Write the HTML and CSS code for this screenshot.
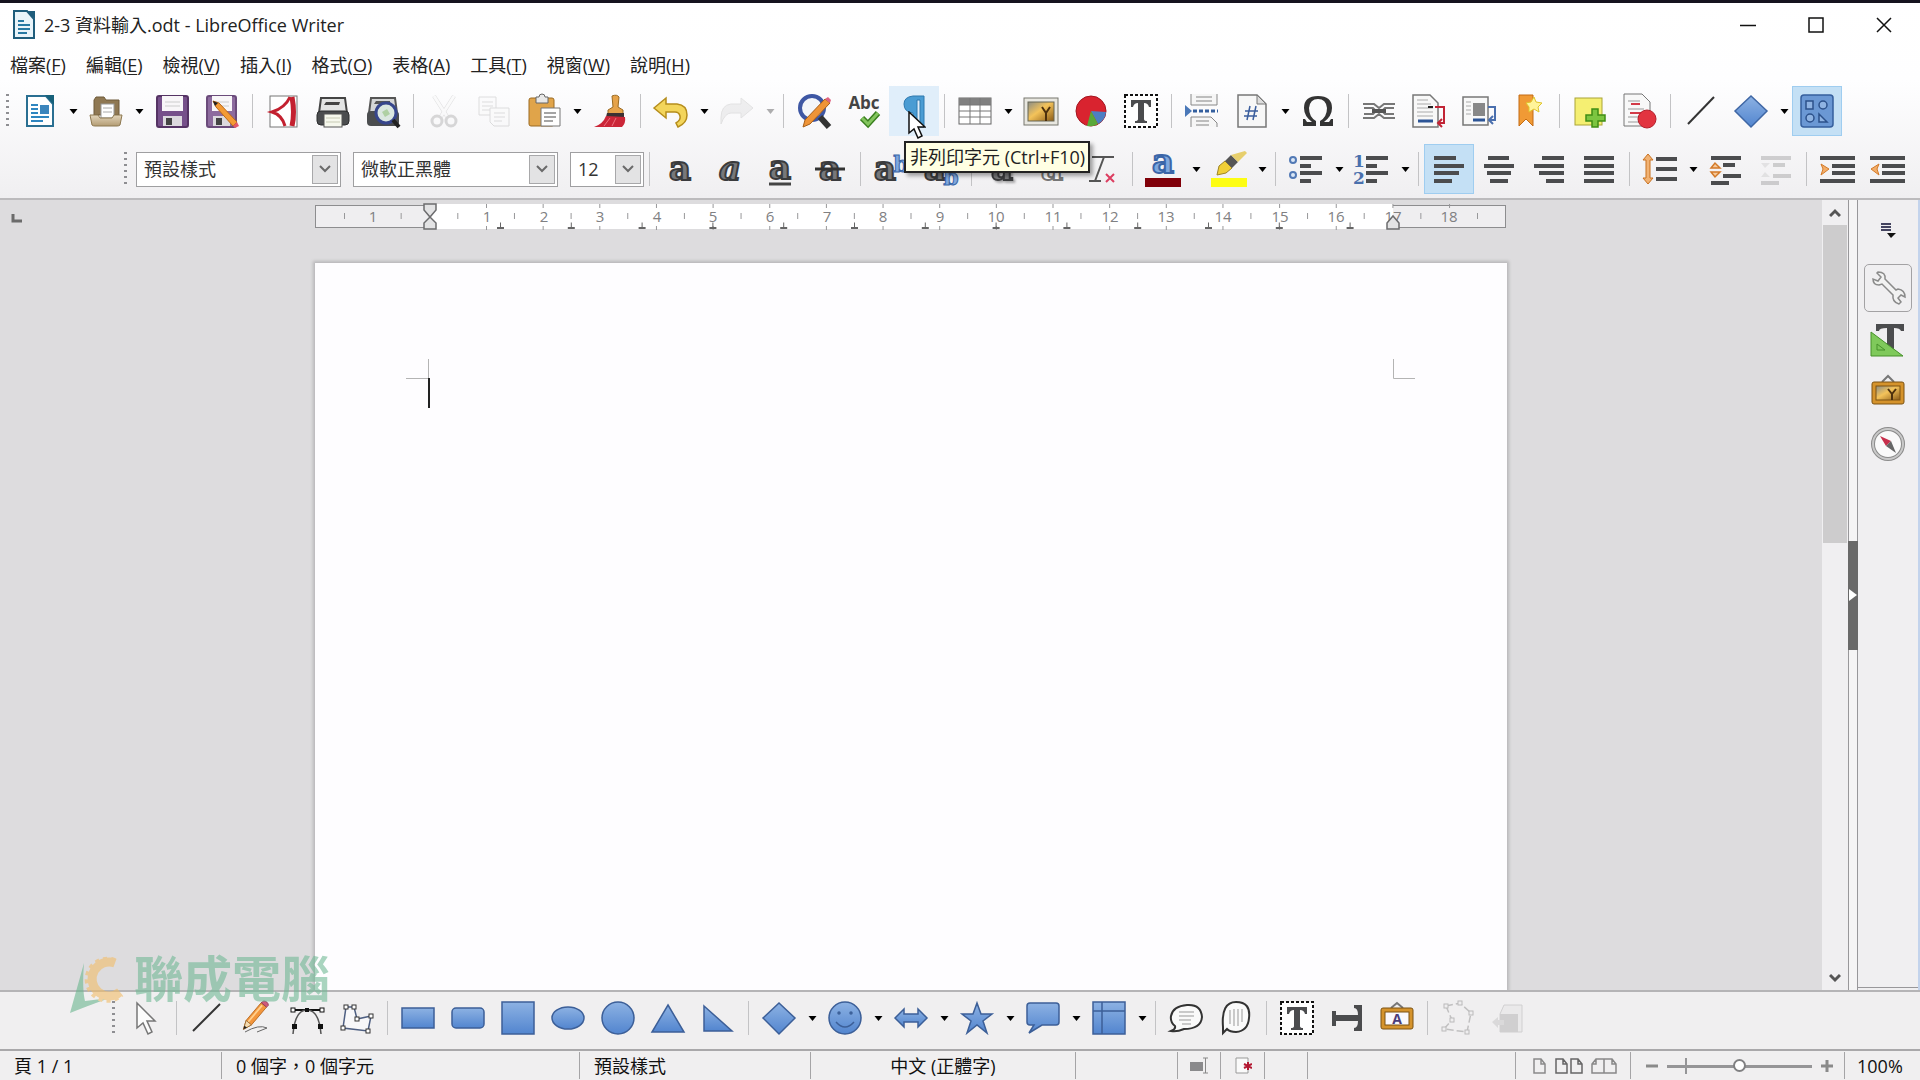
FILE: index.html
```html
<!DOCTYPE html>
<html lang="zh-Hant">
<head>
<meta charset="utf-8">
<title>2-3 資料輸入.odt - LibreOffice Writer</title>
<link rel="stylesheet" href="styles.css">
</head>
<body>
<svg class="defs" width="0" height="0" aria-hidden="true">
  <defs>
    <linearGradient id="blue" x1="0" y1="0" x2="0" y2="1"><stop offset="0" stop-color="#8db2e3"/><stop offset="1" stop-color="#5285cf"/></linearGradient>
    <linearGradient id="sunset" x1="0" y1="0" x2="1" y2="1"><stop offset="0" stop-color="#8b8d86"/><stop offset=".45" stop-color="#f4c35a"/><stop offset="1" stop-color="#8a5a16"/></linearGradient>
    <linearGradient id="folder" x1="0" y1="0" x2="0" y2="1"><stop offset="0" stop-color="#e3d5bb"/><stop offset="1" stop-color="#b39c74"/></linearGradient>
    <symbol id="drop" viewBox="0 0 8 5"><path d="M0 0H8L4 5Z"/></symbol>
    <symbol id="chev" viewBox="0 0 12 8"><path d="M1 1L6 6L11 1" fill="none" stroke="#6a6a6a" stroke-width="2"/></symbol>
    <symbol id="textbox" viewBox="0 0 36 36"><rect x="2" y="2" width="32" height="32" fill="#fff" stroke="#111" stroke-width="2" stroke-dasharray="3 2"/><path d="M8 7H28V14H26Q25 10 21 10V26Q21 28 24 28V30H12V28Q15 28 15 26V10Q11 10 10 14H8Z" fill="#4b4c4e"/></symbol>
    <symbol id="pencil" viewBox="0 0 36 36"><path d="M5 33L8 23L25 3L31 8L14 28Z" fill="#f3963c" stroke="#b5651b"/><path d="M10 25L26 6" stroke="#ffd08e" stroke-width="2"/><path d="M25 3L28 1Q33 2 33 6L31 8Z" fill="#d0587a" stroke="#8d3a55"/><path d="M5 33L8 23L14 28Z" fill="#f5dbb0" stroke="#9a6a30"/><path d="M5 33L6 29L9 31Z" fill="#222"/></symbol>
  </defs>
</svg>

<header class="titlebar">
  <svg width="24" height="30" viewBox="0 0 24 30"><path d="M2 1H15L22 9V28H2Z" fill="#e9f4fa" stroke="#1f5d7c" stroke-width="2"/><path d="M15 1H23V9Z" fill="#1f5d7c"/><path d="M6 11H12M6 15H18M6 19H18M6 23H15" stroke="#2779a3" stroke-width="2"/></svg>
  <h1>2-3 資料輸入.odt - LibreOffice Writer</h1>
  <div class="window-buttons">
    <button aria-label="最小化"><svg width="16" height="16" viewBox="0 0 16 16"><path d="M0 8.500H16" stroke="#111" stroke-width="1.500"/></svg></button>
    <button aria-label="最大化"><svg width="16" height="16" viewBox="0 0 16 16"><rect x="1" y="1" width="14" height="14" fill="none" stroke="#111" stroke-width="1.500"/></svg></button>
    <button aria-label="關閉"><svg width="16" height="16" viewBox="0 0 16 16"><path d="M1 1L15 15M15 1L1 15" stroke="#111" stroke-width="1.500"/></svg></button>
  </div>
</header>

<nav class="menubar">
  <a href="#">檔案(<u>F</u>)</a><a href="#">編輯(<u>E</u>)</a><a href="#">檢視(<u>V</u>)</a><a href="#">插入(<u>I</u>)</a><a href="#">格式(<u>O</u>)</a><a href="#">表格(<u>A</u>)</a><a href="#">工具(<u>T</u>)</a><a href="#">視窗(<u>W</u>)</a><a href="#">說明(<u>H</u>)</a>
</nav>

<div class="toolbar standard">
  <i class="grip"></i>
  <button aria-label="新增"><svg viewBox="0 0 36 36"><path d="M5 3H24L31 11V33H5Z" fill="#fff" stroke="#2a6f92" stroke-width="2"/><path d="M23 2H32V12Z" fill="#17617a"/><path d="M9 12H16M9 16H16M9 20H16M9 24H27M9 28H21" stroke="#2f86c0" stroke-width="2"/><rect x="18" y="12" width="9" height="9" fill="#3c86bd"/></svg></button>
  <button class="arrow" aria-label="新增選項"><svg><use href="#drop"/></svg></button>
  <button aria-label="開啟"><svg viewBox="0 0 36 36"><path d="M6 20V7L8 4H16L18 7H31V22H6Z" fill="#8f7853" stroke="#6e5a3a"/><rect x="13" y="11" width="13" height="14" fill="#fff" stroke="#999"/><path d="M15 15H24M15 19H24" stroke="#aaa"/><path d="M2 22H10L12 25H24L26 22H34L32 32Q31 33 29 33H7Q5 33 4 32Z" fill="url(#folder)" stroke="#8d7850"/></svg></button>
  <button class="arrow" aria-label="開啟選項"><svg><use href="#drop"/></svg></button>
  <button aria-label="儲存"><svg viewBox="0 0 36 36"><rect x="3" y="3" width="31" height="31" rx="2" fill="#76508a" stroke="#553364" stroke-width="2"/><rect x="8" y="3" width="21" height="15" fill="#f8f6f8"/><path d="M11 9H26M11 13H26" stroke="#ccc"/><rect x="9" y="23" width="19" height="10" fill="#dcd9de"/><rect x="12" y="25" width="6" height="7" fill="#444"/></svg></button>
  <button aria-label="另存新檔"><svg viewBox="0 0 36 36"><rect x="3" y="3" width="29" height="31" rx="2" fill="#8d6b9e" stroke="#6b4b7b" stroke-width="2"/><rect x="8" y="3" width="20" height="15" fill="#f8f6f8"/><path d="M11 9H25M11 13H25" stroke="#ccc"/><rect x="9" y="23" width="17" height="10" fill="#dcd9de"/><rect x="12" y="25" width="6" height="7" fill="#444"/><path d="M9 8L15 10L33 29L29 33L12 14Z" fill="#f49a35" stroke="#bb6918"/><path d="M9 8L14 10L11 13Z" fill="#222"/><path d="M33 29L35 33L31 35L29 33Z" fill="#e5586a"/></svg></button>
  <i class="sep"></i>
  <button aria-label="匯出為 PDF"><svg viewBox="0 0 36 36"><rect x="5" y="3" width="27" height="31" fill="#fff" stroke="#777"/><path d="M25 4Q20 15 7 19Q17 22 20 33" fill="none" stroke="#c3202f" stroke-width="3"/><path d="M27 4Q30 20 27 33" fill="none" stroke="#c3202f" stroke-width="5"/></svg></button>
  <button aria-label="列印"><svg viewBox="0 0 36 36"><path d="M4 20L6 5H30L32 20Z" fill="#e3e4e4" stroke="#444" stroke-width="2"/><path d="M11 9H25L24 12H9Z" fill="#444"/><rect x="2" y="18" width="32" height="14" rx="4" fill="#4b4d4f" stroke="#2d2e2f"/><rect x="9" y="21" width="18" height="13" fill="#f6f8ed" stroke="#555"/><path d="M11 25H25M11 29H25" stroke="#c8cbb5"/></svg></button>
  <button aria-label="預覽列印"><svg viewBox="0 0 36 36"><path d="M4 20L6 5H30L32 20Z" fill="#d5d6d7" stroke="#555" stroke-width="2"/><path d="M11 8H25V11H9Z" fill="#555"/><rect x="2" y="18" width="32" height="15" rx="4" fill="#4b4d4f"/><circle cx="21" cy="20" r="10" fill="#dbe7e0" stroke="#37468c" stroke-width="3"/><path d="M28 27L34 34" stroke="#222" stroke-width="4"/><path d="M17 19L22 16L25 21L20 24Z" fill="#afd0a3"/></svg></button>
  <i class="sep"></i>
  <button class="off" aria-label="剪下" disabled><svg viewBox="0 0 36 36"><path d="M8 3L22 25M28 3L14 25" stroke="#999" stroke-width="4"/><path d="M8 3L22 25M28 3L14 25" stroke="#f8f8f8" stroke-width="3"/><circle cx="11" cy="28" r="5" fill="none" stroke="#888" stroke-width="3"/><circle cx="25" cy="28" r="5" fill="none" stroke="#888" stroke-width="3"/></svg></button>
  <button class="off" aria-label="複製" disabled><svg viewBox="0 0 36 36"><path d="M3 4H20V22H3Z" fill="#fafafa" stroke="#999"/><path d="M6 9H17M6 13H17M6 17H14" stroke="#999"/><path d="M14 15H33V33H18L14 29Z" fill="#fafafa" stroke="#999"/><path d="M18 20H29M18 24H29M18 28H26" stroke="#999"/></svg></button>
  <button aria-label="貼上"><svg viewBox="0 0 36 36"><rect x="3" y="5" width="25" height="28" rx="2" fill="#e0a44a" stroke="#9b6b22"/><path d="M10 4H13Q13 1 16 1T19 4H22V10H10Z" fill="#e8e8e8" stroke="#666"/><path d="M15 15H34V33H15Z" fill="#fff" stroke="#777"/><path d="M18 20H30M18 24H30M18 28H27" stroke="#888" stroke-width="1.500"/></svg></button>
  <button class="arrow" aria-label="貼上選項"><svg><use href="#drop"/></svg></button>
  <button aria-label="仿製格式"><svg viewBox="0 0 36 36"><path d="M20 3Q25 1 27 4L26 14L31 17V22H16V17L21 14Z" fill="#e6a34a" stroke="#9b6b22"/><path d="M15 20H32V25L14 24Z" fill="#3b3133"/><path d="M14 23L33 24Q34 30 30 34H2Q11 31 14 23Z" fill="#cb2638"/><path d="M18 25L12 33M24 25L20 33" stroke="#ee7280"/></svg></button>
  <i class="sep"></i>
  <button aria-label="復原"><svg viewBox="0 0 36 36"><path d="M1 15L13 5V11H24Q34 12 34 22Q34 30 25 34L23 30Q28 27 27 23Q26 19 22 19H13V25Z" fill="#f3d55b" stroke="#b58d1c" stroke-width="1.500"/></svg></button>
  <button class="arrow" aria-label="復原選項"><svg><use href="#drop"/></svg></button>
  <button class="off" aria-label="取消復原" disabled><svg viewBox="0 0 36 36"><path d="M34 15L22 5V11H12Q2 12 2 25V31Q6 20 12 20H22V25Z" fill="#d2d2d2" stroke="#aaa"/></svg></button>
  <button class="arrow off" aria-label="取消復原選項"><svg><use href="#drop"/></svg></button>
  <i class="sep"></i>
  <button aria-label="尋找與取代"><svg viewBox="0 0 36 36"><circle cx="16" cy="15" r="12" fill="#f3f5fa" stroke="#3e57a4" stroke-width="4"/><path d="M24 24L33 34" stroke="#333" stroke-width="6"/><path d="M7 34L9 27L29 6L34 10L14 31Z" fill="#ef9437" stroke="#a65e1a"/><path d="M29 6L34 10L35 7L32 4Z" fill="#df6380"/></svg></button>
  <button aria-label="拼字檢查"><svg viewBox="0 0 36 36"><text x="18" y="16" text-anchor="middle" class="abc">Abc</text><path d="M16 25L22 31L32 20" fill="none" stroke="#397f1e" stroke-width="6"/><path d="M16 25L22 31L32 20" fill="none" stroke="#83c55e" stroke-width="3"/></svg></button>
  <div class="hovered">
    <button class="hover" aria-label="非列印字元" aria-describedby="tip"><svg viewBox="0 0 36 36"><path d="M17 3H28V34H24V7H21V34H17V20Q8 19 8 11Q8 4 17 3Z" fill="#4a9cd3" stroke="#2d78ae"/></svg></button>
    <svg class="pointer" width="18" height="28" viewBox="0 0 18 28"><path d="M1 1V22L6 18L10 27L14 25L10 16H17Z" fill="#fff" stroke="#111" stroke-width="1.500"/></svg>
    <div class="tooltip" id="tip" role="tooltip">非列印字元 (Ctrl+F10)</div>
  </div>
  <i class="sep"></i>
  <button aria-label="插入表格"><svg viewBox="0 0 36 36"><rect x="2" y="5" width="32" height="26" fill="#fff" stroke="#666"/><path d="M2 5H34V12H2Z" fill="#808080"/><path d="M2 12H34M2 18H34M2 24H34M13 5V31M23 5V31" stroke="#777"/></svg></button>
  <button class="arrow" aria-label="表格選項"><svg><use href="#drop"/></svg></button>
  <button aria-label="影像"><svg viewBox="0 0 36 36"><rect x="1" y="5" width="34" height="27" fill="#e8e7e0" stroke="#77776f"/><rect x="5" y="9" width="26" height="19" fill="url(#sunset)" stroke="#665"/><path d="M23 28V20L19 14M23 20L27 14" fill="none" stroke="#4d300d" stroke-width="2"/></svg></button>
  <button aria-label="圖表"><svg viewBox="0 0 36 36"><circle cx="18" cy="18" r="15" fill="#d9232f" stroke="#a3151f"/><path d="M18 18L33 19A15 15 0 0 1 25 31Z" fill="#4d7fc4"/><path d="M18 18L25 31A15 15 0 0 1 14 33Z" fill="#5aa839"/></svg></button>
  <button aria-label="文字方塊"><svg><use href="#textbox"/></svg></button>
  <i class="sep"></i>
  <button aria-label="插入分頁符"><svg viewBox="0 0 36 36"><path d="M7 1V12H33V1M7 34V24H27L33 30V34" fill="#f6f6f6" stroke="#888"/><path d="M12 4H28M12 8H28M12 28H25M12 32H25" stroke="#aaa" stroke-width="1.500"/><path d="M1 12L8 18L1 24Z" fill="#4a78b8"/><path d="M9 18H34" stroke="#345f9e" stroke-width="3" stroke-dasharray="4 2"/></svg></button>
  <button aria-label="插入欄位"><svg viewBox="0 0 36 36"><path d="M4 2H23L32 11V34H4Z" fill="#f7f7f7" stroke="#777" stroke-width="1.500"/><path d="M23 2V11H32Z" fill="#ddd" stroke="#777"/><path d="M16 13L13 27M22 13L19 27M11 18H24M10 23H23" stroke="#3b5e9e" stroke-width="1.500"/></svg></button>
  <button class="arrow" aria-label="欄位選項"><svg><use href="#drop"/></svg></button>
  <button aria-label="特殊字元"><svg viewBox="0 0 36 36"><path d="M3 33V26H5L7 29H12Q4 23 4 15Q4 3 18 3T32 15Q32 23 24 29H29L31 26H33V33H20V28Q27 24 27 15Q26 6 18 6T9 15Q9 24 16 28V33Z" fill="#333"/></svg></button>
  <i class="sep"></i>
  <button aria-label="超連結"><svg viewBox="0 0 36 36"><path d="M2 11H13L18 15L23 11H34M2 25H13L18 21L23 25H34M3 15H12L15 18L12 21H3M33 15H24L21 18L24 21H33" fill="none" stroke="#777" stroke-width="2"/><path d="M11 18H25" stroke="#555" stroke-width="4"/></svg></button>
  <button aria-label="註腳"><svg viewBox="0 0 36 36"><path d="M2 2H19L27 10V34H2Z" fill="#f8f8f8" stroke="#777" stroke-width="1.500"/><path d="M6 7H17M6 11H20M6 15H22M6 19H22M6 23H22" stroke="#aaa"/><path d="M17 14H22" stroke="#222" stroke-width="2"/><path d="M7 28H22" stroke="#2d5596" stroke-width="3"/><path d="M24 14H33V30H28M31 26L27 30L31 34" fill="none" stroke="#c22435" stroke-width="2"/></svg></button>
  <button aria-label="交互參照"><svg viewBox="0 0 36 36"><rect x="2" y="4" width="25" height="28" fill="#f8f8f8" stroke="#777" stroke-width="1.500"/><path d="M5 9H10M5 13H10M5 17H10M5 21H10" stroke="#aaa"/><rect x="12" y="10" width="12" height="13" fill="#888"/><path d="M12 27H24" stroke="#2d5596" stroke-width="3"/><path d="M27 14H34V27H29M32 23L28 27L32 31" fill="none" stroke="#4a6fae" stroke-width="2"/></svg></button>
  <button aria-label="書籤"><svg viewBox="0 0 36 36"><path d="M8 2H22V33L15 26L8 33Z" fill="#f09a35" stroke="#c36b14"/><path d="M23 4L25 9L31 10L27 14L28 19L23 16L18 19L18 14L15 10L20 9Z" fill="#fff49a" stroke="#e0c52c"/></svg></button>
  <i class="sep"></i>
  <button aria-label="註解"><svg viewBox="0 0 36 36"><rect x="3" y="5" width="27" height="27" fill="#f5ef72" stroke="#aaa437"/><path d="M20 16H26V22H33V28H26V34H20V28H14V22H20Z" fill="#7cc540" stroke="#3f8d14" stroke-width="1.500"/></svg></button>
  <button aria-label="追蹤修訂"><svg viewBox="0 0 36 36"><path d="M2 1H20L28 9V33H2Z" fill="#f8f8f8" stroke="#777"/><path d="M6 8H18M6 16H22M6 24H16M6 29H18" stroke="#999"/><path d="M9 11H18M8 20H20" stroke="#d33b48" stroke-width="2"/><circle cx="25" cy="26" r="9" fill="#e23440" stroke="#b31e2a"/></svg></button>
  <i class="sep"></i>
  <button aria-label="線條"><svg viewBox="0 0 36 36"><path d="M5 31L31 4" stroke="#333" stroke-width="2"/></svg></button>
  <button aria-label="基本形狀"><svg viewBox="0 0 36 36"><path d="M18 3L34 18L18 34L2 18Z" fill="url(#blue)" stroke="#3f67a5" stroke-width="1.500"/></svg></button>
  <button class="arrow" aria-label="基本形狀選項"><svg><use href="#drop"/></svg></button>
  <button class="on" aria-label="顯示繪圖功能"><svg viewBox="0 0 36 36"><rect x="2" y="2" width="32" height="32" rx="3" fill="#6b98d4" stroke="#365f9d" stroke-width="1.500"/><g fill="#8fb3e2" stroke="#2c518b" stroke-width="1.500"><rect x="7" y="8" width="7" height="8"/><circle cx="24" cy="12" r="4"/><circle cx="11" cy="25" r="4"/><path d="M20 21V29H28Z"/></g></svg></button>
</div>

<div class="toolbar formatting">
  <i class="grip"></i>
  <div class="combo wide"><select aria-label="段落樣式"><option>預設樣式</option></select><span><svg width="12" height="8"><use href="#chev"/></svg></span></div>
  <div class="combo wide"><select aria-label="字型名稱"><option>微軟正黑體</option></select><span><svg width="12" height="8"><use href="#chev"/></svg></span></div>
  <div class="combo narrow"><select aria-label="字型大小"><option>12</option></select><span><svg width="12" height="8"><use href="#chev"/></svg></span></div>
  <i class="sep"></i>
  <button aria-label="粗體"><svg viewBox="0 0 36 36"><text class="ch" x="18" y="29" text-anchor="middle">a</text></svg></button>
  <button aria-label="斜體"><svg viewBox="0 0 36 36"><text class="ch it" x="18" y="29" text-anchor="middle">a</text></svg></button>
  <button aria-label="底線"><svg viewBox="0 0 36 36"><text class="ch" x="18" y="28" text-anchor="middle">a</text><path d="M7 33H29" stroke="#444" stroke-width="3"/></svg></button>
  <button aria-label="刪除線"><svg viewBox="0 0 36 36"><text class="ch" x="18" y="29" text-anchor="middle">a</text><path d="M3 18H33" stroke="#333" stroke-width="3"/></svg></button>
  <i class="sep"></i>
  <button aria-label="上標"><svg viewBox="0 0 36 36"><text class="ch" x="12" y="29" text-anchor="middle">a</text><text class="mini" x="28" y="21" text-anchor="middle">b</text></svg></button>
  <button aria-label="下標"><svg viewBox="0 0 36 36"><text class="ch" x="12" y="29" text-anchor="middle">a</text><text class="mini" x="28" y="34" text-anchor="middle">b</text></svg></button>
  <i class="sep"></i>
  <button aria-label="陰影"><svg viewBox="0 0 36 36"><text class="ch shade" x="18" y="29" text-anchor="middle">a</text></svg></button>
  <button aria-label="外框"><svg viewBox="0 0 36 36"><text class="ch outline" x="18" y="29" text-anchor="middle">a</text></svg></button>
  <button aria-label="清除格式"><svg viewBox="0 0 36 36"><path d="M8 6H30M20 6L11 30M5 30H17" stroke="#555" stroke-width="2"/><path d="M22 23L30 31M30 23L22 31" stroke="#dc3d60" stroke-width="2"/></svg></button>
  <i class="sep"></i>
  <button aria-label="字型色彩"><svg viewBox="0 0 36 36"><text class="ch blue" x="18" y="22" text-anchor="middle">a</text><rect x="0" y="27" width="36" height="9" fill="#800009"/></svg></button>
  <button class="arrow" aria-label="字型色彩選項"><svg><use href="#drop"/></svg></button>
  <button aria-label="醒目提示"><svg viewBox="0 0 36 36"><path d="M6 24L8 15L14 10L21 17L15 22Z" fill="#f0cf37" stroke="#9f8526"/><path d="M14 10L20 4L27 11L21 17Z" fill="#555"/><path d="M20 4L34 0L36 2L27 11Z" fill="#e7cf6d"/><rect x="0" y="27" width="36" height="9" fill="#fdfd13"/></svg></button>
  <button class="arrow" aria-label="醒目提示選項"><svg><use href="#drop"/></svg></button>
  <i class="sep"></i>
  <button aria-label="項目符號"><svg viewBox="0 0 36 36"><circle cx="5" cy="9" r="3" fill="#dbe7f6" stroke="#5279b5" stroke-width="2"/><circle cx="5" cy="24" r="3" fill="#dbe7f6" stroke="#5279b5" stroke-width="2"/><path d="M12 7H34M12 15H23M12 22H34M12 30H23" stroke="#4b4c4e" stroke-width="4"/></svg></button>
  <button class="arrow" aria-label="項目符號選項"><svg><use href="#drop"/></svg></button>
  <button aria-label="編號"><svg viewBox="0 0 36 36"><text class="num" x="5" y="16" text-anchor="middle">1</text><text class="num" x="5" y="33" text-anchor="middle">2</text><path d="M12 7H34M12 15H23M12 22H34M12 30H23" stroke="#4b4c4e" stroke-width="4"/></svg></button>
  <button class="arrow" aria-label="編號選項"><svg><use href="#drop"/></svg></button>
  <i class="sep"></i>
  <button class="on" aria-label="靠左對齊"><svg viewBox="0 0 36 36"><path d="M3 7H25M3 15H33M3 22H28M3 30H21" stroke="#4b4c4e" stroke-width="4"/></svg></button>
  <button aria-label="置中對齊"><svg viewBox="0 0 36 36"><path d="M7 7H28M3 15H33M6 22H30M9 30H27" stroke="#4b4c4e" stroke-width="4"/></svg></button>
  <button aria-label="靠右對齊"><svg viewBox="0 0 36 36"><path d="M11 7H33M3 15H33M8 22H33M15 30H33" stroke="#4b4c4e" stroke-width="4"/></svg></button>
  <button aria-label="左右對齊"><svg viewBox="0 0 36 36"><path d="M3 7H33M3 15H33M3 22H33M3 30H33" stroke="#4b4c4e" stroke-width="4"/></svg></button>
  <i class="sep"></i>
  <button aria-label="行距"><svg viewBox="0 0 36 36"><path d="M6 3L11 9H8V27H11L6 33L1 27H4V9H1Z" fill="#f1b273" stroke="#c8701f"/><path d="M14 8H35M14 18H35M14 28H35" stroke="#4b4c4e" stroke-width="4"/></svg></button>
  <button class="arrow" aria-label="行距選項"><svg><use href="#drop"/></svg></button>
  <button aria-label="增加段落間距"><svg viewBox="0 0 36 36"><path d="M3 7H33M15 14H27M15 25H33M3 32H21" stroke="#4b4c4e" stroke-width="4"/><path d="M3 17L7 12L12 17ZM3 21L7 26L12 21Z" fill="#f7c898" stroke="#d37a29" stroke-width="1.500"/></svg></button>
  <button class="off" aria-label="減少段落間距" disabled><svg viewBox="0 0 36 36"><path d="M3 7H33M15 14H27M15 25H33M3 32H21" stroke="#777" stroke-width="4"/><path d="M3 12L7 17L12 12ZM3 26L7 21L12 26Z" fill="#bbb"/></svg></button>
  <i class="sep"></i>
  <button aria-label="增加縮排"><svg viewBox="0 0 36 36"><path d="M1 7H36M13 15H36M13 22H36M1 30H36" stroke="#4b4c4e" stroke-width="4"/><path d="M2 13L10 18L2 24L4 18Z" fill="#f3ad68" stroke="#d37a29"/></svg></button>
  <button aria-label="減少縮排"><svg viewBox="0 0 36 36"><path d="M1 7H36M13 15H36M13 22H36M1 30H36" stroke="#4b4c4e" stroke-width="4"/><path d="M10 13L2 18L10 24L8 18Z" fill="#f3ad68" stroke="#d37a29"/></svg></button>
</div>

<main class="workspace">
  <section class="document">
    <div class="ruler-row">
      <svg class="tab-kind" width="12" height="10" viewBox="0 0 12 10"><path d="M2 0V7H11" fill="none" stroke="#6b6b6b" stroke-width="3"/></svg>
      <svg class="ruler" width="1192" height="28" viewBox="0 0 1192 28">
        <rect x="0.500" y="2.500" width="1190" height="22" fill="#efeef0" stroke="#8d8d8f"/>
        <rect x="115" y="1" width="963" height="25" fill="#fff"/>
        <g stroke="#98989a" fill="none">
          <path d="M29 13H1170" stroke-width="6" stroke-dasharray="1 27.320" class="half"/>
          <path d="M171 3H1170" stroke-width="4" stroke-dasharray="1 55.650"/>
          <path d="M171 25H1060" stroke-width="4" stroke-dasharray="1 55.650"/>
          <path d="M185 22H1070" stroke="#666" stroke-width="5" stroke-dasharray="1 69.800"/>
          <path d="M182 25H1070" stroke="#666" stroke-width="2" stroke-dasharray="7 63.800"/>
        </g>
        <g text-anchor="middle">
          <text x="58" y="19">1</text><text x="172" y="19">1</text><text x="229" y="19">2</text><text x="285" y="19">3</text><text x="342" y="19">4</text><text x="398" y="19">5</text><text x="455" y="19">6</text><text x="512" y="19">7</text><text x="568" y="19">8</text><text x="625" y="19">9</text><text x="681" y="19">10</text><text x="738" y="19">11</text><text x="795" y="19">12</text><text x="851" y="19">13</text><text x="908" y="19">14</text><text x="965" y="19">15</text><text x="1021" y="19">16</text><text x="1078" y="19">17</text><text x="1134" y="19">18</text>
        </g>
        <g fill="#e3e3e4" stroke="#6c6c6e" stroke-width="1.500">
          <path d="M109 1H121V7L115 14L109 7Z"/><path d="M109 26H121V20L115 14L109 20Z"/><path d="M1072 26H1084V20L1078 13L1072 20Z"/>
        </g>
      </svg>
    </div>
    <article class="page">
      <svg width="24" height="50" viewBox="0 0 24 50"><path d="M22.500 0V19M0 19.500H22" stroke="#b4b4b4"/><path d="M23 19V49" stroke="#222" stroke-width="2"/></svg>
      <svg width="24" height="50" viewBox="0 0 24 50"><path d="M1.500 0V19.500H23" fill="none" stroke="#b4b4b4"/></svg>
    </article>
  </section>

  <div class="scrollbar">
    <button aria-label="向上捲動"><svg width="12" height="10" viewBox="0 0 12 10"><path d="M1 8L6 3L11 8" fill="none" stroke="#555" stroke-width="3"/></svg></button>
    <div class="thumb"></div>
    <button aria-label="向下捲動"><svg width="12" height="10" viewBox="0 0 12 10"><path d="M1 2L6 7L11 2" fill="none" stroke="#555" stroke-width="3"/></svg></button>
  </div>
  <div class="splitter"><button aria-label="隱藏側邊欄"><svg width="8" height="12" viewBox="0 0 8 12"><path d="M0 0L8 6L0 12Z" fill="#fff"/></svg></button></div>
  <aside class="sidebar">
    <button aria-label="側邊欄設定"><svg viewBox="0 0 36 36"><path d="M11 12H21M11 15H21M11 18H21" stroke="#444460" stroke-width="2"/><path d="M17 21H26L21 26Z" fill="#111"/></svg></button>
    <button class="current" aria-label="屬性"><svg viewBox="0 0 36 36"><path d="M3 9Q3 15 9 15L12 14L23 25Q22 32 29 34L31 32L28 28L31 25L35 27Q35 20 28 19L26 20L15 9Q16 2 8 2L7 3L11 7L8 11Z" fill="#f2f2f2" stroke="#8a8a8a" stroke-width="1.500"/></svg></button>
    <button aria-label="樣式"><svg viewBox="0 0 36 36"><path d="M6 2H34V9H31Q30 6 24 6V29H17V6Q9 6 9 9H6Z" fill="#4b4c4e"/><path d="M1 10L33 34H1Z" fill="#7fc95b" stroke="#46912a"/><path d="M7 22V28H15Z" fill="none" stroke="#46912a"/></svg></button>
    <button aria-label="圖庫"><svg viewBox="0 0 36 36"><path d="M12 8L18 2L24 8" fill="none" stroke="#777" stroke-width="2"/><rect x="2" y="8" width="32" height="22" rx="2" fill="#d5932c" stroke="#7d5312"/><rect x="6" y="12" width="24" height="14" fill="url(#sunset)" stroke="#7d5312"/><path d="M22 26V20L18 15M22 20L26 15" fill="none" stroke="#4d300d" stroke-width="2"/></svg></button>
    <button aria-label="導覽"><svg viewBox="0 0 36 36"><circle cx="18" cy="18" r="15" fill="#fafafa" stroke="#8b8b8b" stroke-width="4"/><circle cx="18" cy="18" r="15" fill="none" stroke="#c9c9c9" stroke-width="2"/><path d="M10 10L21 15L16 20Z" fill="#c72f4c"/><path d="M26 27L16 20L21 15Z" fill="#666"/></svg></button>
  </aside>
</main>

<div class="toolbar drawing">
  <i class="grip"></i>
  <button aria-label="選取"><svg viewBox="0 0 36 36"><path d="M9 3V28L15 23L20 34L24 32L19 21H27Z" fill="#fcfcfc" stroke="#777" stroke-width="1.500"/></svg></button>
  <i class="sep"></i>
  <button aria-label="線條"><svg viewBox="0 0 36 36"><path d="M4 31L31 4" stroke="#333" stroke-width="2"/></svg></button>
  <button aria-label="手繪線條"><svg viewBox="0 0 36 36"><path d="M6 32Q20 24 28 28L18 32" fill="none" stroke="#666"/><use href="#pencil" width="32" height="32"/></svg></button>
  <button aria-label="曲線"><svg viewBox="0 0 36 36"><path d="M3 10H33" stroke="#111" stroke-width="2"/><path d="M4 34Q6 10 18 10T32 34" fill="none" stroke="#555" stroke-width="1.500"/><g fill="#111"><rect x="16" y="8" width="4" height="4"/><rect x="3" y="24" width="5" height="5"/><rect x="29" y="24" width="5" height="5"/></g><g fill="#fff" stroke="#111"><rect x="2" y="8" width="4" height="4"/><rect x="31" y="8" width="4" height="4"/></g></svg></button>
  <button aria-label="多邊形"><svg viewBox="0 0 36 36"><path d="M7 7H15L18 19L32 16L29 31L4 28Z" fill="#f8f8fa" stroke="#4e5f82" stroke-width="1.500"/><g fill="#fff" stroke="#333"><rect x="5" y="5" width="4" height="4"/><rect x="13" y="5" width="4" height="4"/><rect x="16" y="17" width="4" height="4"/><rect x="30" y="14" width="4" height="4"/><rect x="27" y="29" width="4" height="4"/><rect x="2" y="26" width="4" height="4"/></g></svg></button>
  <i class="sep"></i>
  <button class="shape" aria-label="矩形"><svg viewBox="0 0 36 36"><rect x="2" y="8" width="32" height="20"/></svg></button>
  <button class="shape" aria-label="圓角矩形"><svg viewBox="0 0 36 36"><rect x="2" y="8" width="32" height="20" rx="4"/></svg></button>
  <button class="shape" aria-label="正方形"><svg viewBox="0 0 36 36"><rect x="2" y="2" width="32" height="32"/></svg></button>
  <button class="shape" aria-label="橢圓"><svg viewBox="0 0 36 36"><ellipse cx="18" cy="18" rx="16" ry="11"/></svg></button>
  <button class="shape" aria-label="圓"><svg viewBox="0 0 36 36"><circle cx="18" cy="18" r="16"/></svg></button>
  <button class="shape" aria-label="三角形"><svg viewBox="0 0 36 36"><path d="M18 5L34 32H2Z"/></svg></button>
  <button class="shape" aria-label="直角三角形"><svg viewBox="0 0 36 36"><path d="M4 6L32 31H4Z"/></svg></button>
  <i class="sep"></i>
  <button class="shape" aria-label="基本形狀"><svg viewBox="0 0 36 36"><path d="M18 3L34 18L18 34L2 18Z"/></svg></button>
  <button class="arrow" aria-label="基本形狀選項"><svg><use href="#drop"/></svg></button>
  <button class="shape" aria-label="符號形狀"><svg viewBox="0 0 36 36"><circle cx="18" cy="18" r="16"/><circle cx="12" cy="13" r="1"/><circle cx="24" cy="13" r="1"/><path class="hollow" d="M9 22Q18 32 27 22"/></svg></button>
  <button class="arrow" aria-label="符號形狀選項"><svg><use href="#drop"/></svg></button>
  <button class="shape" aria-label="區塊箭頭"><svg viewBox="0 0 36 36"><path d="M2 18L11 9V14H25V9L34 18L25 27V22H11V27Z"/></svg></button>
  <button class="arrow" aria-label="區塊箭頭選項"><svg><use href="#drop"/></svg></button>
  <button class="shape" aria-label="星形"><svg viewBox="0 0 36 36"><path d="M18 3L22 14H33L24 21L28 33L18 25L8 33L12 21L3 14H14Z"/></svg></button>
  <button class="arrow" aria-label="星形選項"><svg><use href="#drop"/></svg></button>
  <button class="shape" aria-label="圖說文字"><svg viewBox="0 0 36 36"><path d="M5 3H31Q34 3 34 6V22Q34 25 31 25H17L4 33L9 25H5Q2 25 2 22V6Q2 3 5 3Z"/></svg></button>
  <button class="arrow" aria-label="圖說文字選項"><svg><use href="#drop"/></svg></button>
  <button class="shape" aria-label="流程圖"><svg viewBox="0 0 36 36"><rect x="2" y="2" width="32" height="32"/><path d="M11 2V34M2 11H34"/></svg></button>
  <button class="arrow" aria-label="流程圖選項"><svg><use href="#drop"/></svg></button>
  <i class="sep"></i>
  <button aria-label="圖說"><svg viewBox="0 0 36 36"><path d="M3 31Q8 29 7 26Q2 22 3 16Q5 6 19 5T34 17Q33 29 16 29Q9 32 3 31Z" fill="#fafafa" stroke="#333" stroke-width="2"/><path d="M11 12H26M11 16H26M11 20H23M14 24H23" stroke="#999"/></svg></button>
  <button aria-label="直書圖說"><svg viewBox="0 0 36 36"><path d="M5 33V27Q3 2 18 2T31 18Q30 31 18 32Q12 32 9 29Z" fill="#fafafa" stroke="#333" stroke-width="2"/><path d="M12 10V24M16 9V26M20 9V26M24 9V22" stroke="#999"/></svg></button>
  <i class="sep"></i>
  <button aria-label="文字方塊"><svg><use href="#textbox"/></svg></button>
  <button aria-label="直書文字"><svg viewBox="0 0 36 36"><path d="M33 5V31H25V28Q29 28 29 21H7V26H3V11H7V15H29Q29 8 25 8V5Z" fill="#4b4c4e"/></svg></button>
  <button aria-label="文字藝術"><svg viewBox="0 0 36 36"><path d="M12 8L18 3L24 8" fill="none" stroke="#777" stroke-width="2"/><rect x="2" y="8" width="32" height="21" rx="2" fill="#d5932c" stroke="#7d5312"/><rect x="6" y="12" width="24" height="13" fill="#faf8fc" stroke="#7d5312"/><text class="fw" x="18" y="24" text-anchor="middle">A</text></svg></button>
  <i class="sep"></i>
  <button class="off" aria-label="接點" disabled><svg viewBox="0 0 36 36"><path d="M6 6L20 3L31 13M6 6L12 20L4 29L27 32L31 13" fill="none" stroke="#555" stroke-width="1.500" stroke-dasharray="7 3"/><g fill="#eee" stroke="#444"><rect x="4" y="4" width="4" height="4"/><rect x="18" y="1" width="4" height="4"/><rect x="29" y="11" width="4" height="4"/><rect x="10" y="18" width="4" height="4"/><rect x="2" y="27" width="4" height="4"/><rect x="25" y="30" width="4" height="4"/></g></svg></button>
  <button class="off" aria-label="立體化" disabled><svg viewBox="0 0 36 36"><path d="M10 14L14 5H32V32H10Z" fill="#ddd" stroke="#888"/><path d="M10 14H28V32H10Z" fill="#888"/><path d="M2 22L8 17V20H14V25H8V28Z" fill="#aaa"/></svg></button>
</div>

<footer class="statusbar">
  <span>頁 1 / 1</span>
  <span>0 個字，0 個字元</span>
  <span>預設樣式</span>
  <span class="mid">中文 (正體字)</span>
  <span></span>
  <span class="mid"><svg width="20" height="18" viewBox="0 0 20 18"><rect x="1" y="5" width="13" height="9" fill="#8a8a8c"/><path d="M14 1H19M16.500 1V16M14 16H19" stroke="#888"/></svg></span>
  <span class="mid"><svg width="18" height="18" viewBox="0 0 18 18"><path d="M14 6V1H2V16H14V12" fill="#fafafa" stroke="#999"/><path d="M14 5V13M10 7L18 11M18 7L10 11" stroke="#b31832" stroke-width="2"/></svg></span>
  <span></span>
  <span></span>
  <span class="views">
    <button aria-label="單頁"><svg width="14" height="16" viewBox="0 0 14 16"><path d="M1 1H8L12 6V15H1ZM8 1V6H12" fill="none" stroke="#8a8a8a" stroke-width="1.500"/></svg></button>
    <button aria-label="多頁"><svg width="28" height="16" viewBox="0 0 28 16"><path d="M1 1H8L12 6V15H1ZM8 1V6H12M16 1H23L27 6V15H16ZM23 1V6H27" fill="none" stroke="#666" stroke-width="1.500"/></svg></button>
    <button aria-label="書本"><svg width="26" height="16" viewBox="0 0 26 16"><path d="M13 15H1V6L5 1H13ZM5 1V6H1M13 15H25V6L21 1H13M21 1V6H25" fill="none" stroke="#888" stroke-width="1.500"/></svg></button>
  </span>
  <span class="zoom">
    <button aria-label="縮小"><svg width="14" height="14" viewBox="0 0 14 14"><path d="M1 7H13" stroke="#8a8a8a" stroke-width="3"/></svg></button>
    <input type="range" min="0" max="100" value="50" aria-label="縮放比例">
    <button aria-label="放大"><svg width="14" height="14" viewBox="0 0 14 14"><path d="M1 7H13M7 1V13" stroke="#8a8a8a" stroke-width="3"/></svg></button>
  </span>
  <span class="percent">100%</span>
</footer>

<div class="watermark">
  <svg width="60" height="60" viewBox="0 0 60 60"><path d="M14 9Q12 35 15 47Q28 45 37 45Q20 51 0 59Z" fill="#6ab68e"/><path d="M45 9A17 17 0 1 0 50 38" fill="none" stroke="#f2bd69" stroke-width="9"/><path d="M45 6A21 21 0 1 0 52 41" fill="none" stroke="#f2bd69" stroke-width="4" stroke-dasharray="4 4"/></svg>
  <span>聯成電腦</span>
</div>
</body>
</html>
```
FILE: styles.css
```css
* { box-sizing: border-box; }
body {
  margin: 0;
  height: 100vh;
  display: flex;
  flex-direction: column;
  overflow: hidden;
  background: linear-gradient(#fff 0, #fefeff 80px, #f0eff1 198px);
  border-top: 3px solid #15131f;
  font: 18px/24px "Open Sans", "Noto Sans CJK TC", sans-serif;
  color: #222;
}
.defs { flex: none; display: block; }
button {
  border: 0;
  padding: 0;
  background: none;
  display: flex;
  align-items: center;
  justify-content: center;
  font: inherit;
}

.titlebar { display: flex; align-items: center; height: 45px; flex: none; padding: 0 2px 2px 12px; gap: 8px; }
.titlebar h1 { margin: 0; font-size: 18px; font-weight: 400; }
.window-buttons { display: flex; margin-left: auto; }
.window-buttons button { width: 68px; height: 43px; }

.menubar { display: flex; gap: 20px; height: 37px; flex: none; align-items: center; padding: 0 0 4px 10px; }
.menubar a { color: inherit; text-decoration: none; }
.menubar u { text-underline-offset: 2px; }

.toolbar { display: flex; align-items: center; flex: none; }
.toolbar button { width: 50px; height: 50px; flex: none; }
.toolbar button svg { width: 36px; height: 36px; overflow: visible; }
.toolbar button.arrow { width: 16px; }
.toolbar button.arrow svg { width: 9px; height: 5px; }
.toolbar .off svg { opacity: .3; }
.toolbar .on { background: #c4e0f5; border: 1px solid #9fcdf0; }
.toolbar .hover { background: #e0eefa; }
.sep { width: 11px; height: 34px; flex: none; background: linear-gradient(#c3c3c5, #c3c3c5) 5px 0 / 1px 100% no-repeat; }
.grip { width: 3px; height: 34px; flex: none; background: repeating-linear-gradient(#8e8e92 0 2px, transparent 2px 6px); }

.standard { height: 52px; padding-left: 6px; }
.standard .grip { margin-right: 6px; }
.formatting { height: 63px; padding: 3px 0 0 124px; border-bottom: 2px solid #bcbbbd; }
.formatting .grip { margin-right: 9px; }
.drawing { height: 59px; padding: 0 0 5px 112px; background: #f0eff0; border-top: 2px solid #b5b4b6; }
.drawing .grip { margin-right: 6px; }

.hovered { position: relative; }
.pointer { position: absolute; left: 19px; top: 25px; z-index: 3; }
.tooltip {
  position: absolute;
  left: 15px;
  top: 55px;
  z-index: 2;
  padding: 2px 3px 2px 4px;
  border: 2px solid #222;
  background: #ffffe3;
  box-shadow: 3px 3px 4px rgba(0, 0, 0, .35);
  white-space: nowrap;
}

.combo { display: grid; height: 35px; margin-right: 12px; flex: none; }
.combo select, .combo span { grid-area: 1 / 1; }
.combo select {
  appearance: none;
  border: 1px solid #9f9fa1;
  border-radius: 0;
  background: #fff;
  padding: 0 7px;
  font: inherit;
  color: #333;
}
.combo span {
  justify-self: end;
  width: 26px;
  margin: 3px;
  border: 1px solid #a8a8aa;
  background: #e3e3e4;
  display: flex;
  align-items: center;
  justify-content: center;
  pointer-events: none;
}
.wide { width: 205px; }
.narrow { width: 74px; margin-right: 0; }

.abc { font: bold 17px "Open Sans", sans-serif; fill: #444; }
.ch { font: bold 34px "DejaVu Serif", serif; fill: #77787a; stroke: #3a3b3d; stroke-width: 2px; }
.it { font-style: italic; }
.shade { filter: drop-shadow(2px 2px 1px rgba(0, 0, 0, .3)); }
.outline { fill: #fff; stroke: #777; }
.blue { fill: #7fa8de; stroke: #3b66a8; }
.mini { font: bold 22px "DejaVu Serif", serif; fill: #7fa8de; stroke: #3b66a8; stroke-width: 1px; }
.num { font: bold 17px "DejaVu Serif", serif; fill: #4a70ad; }
.fw { font: bold 14px "Open Sans", sans-serif; fill: #4b3c78; }
.shape svg { fill: url(#blue); stroke: #3c5f98; stroke-width: 1.5px; }
.shape .hollow { fill: none; }

.workspace { flex: 1; min-height: 0; display: grid; grid-template-columns: 1fr 26px 10px 60px; background: #f0eff1; border-right: 2px solid #c3d3ec; }
.document { background: #dddcde; overflow: hidden; display: flex; flex-direction: column; align-items: stretch; }
.ruler-row { display: grid; grid-template-columns: 1fr 1192px 1fr; padding-top: 3px; flex: none; }
.tab-kind { margin: 11px 0 0 11px; }
.ruler text { font: 15px "Open Sans", sans-serif; fill: #808082; stroke: none; }
.ruler .half { stroke-dasharray: 1px 55.65px; }
.page {
  flex: 1;
  width: 1192px;
  margin: 32px auto 0;
  background: #fefdff;
  box-shadow: 0 0 3px 2px #b9b8ba;
  display: flex;
  justify-content: space-between;
  padding: 96px 91px 0;
}

.scrollbar { display: flex; flex-direction: column; padding: 0 1px; background: #f0eff1; }
.scrollbar button { height: 25px; flex: none; }
.thumb { height: 318px; background: #cdcccd; }
.scrollbar button:last-child { margin-top: auto; }
.splitter { border: 1px solid #98979a; border-width: 0 1px; background: #f5f4f5; display: flex; align-items: center; justify-content: center; }
.splitter button { width: 10px; height: 109px; flex: none; background: #696969; }
.sidebar { display: flex; flex-direction: column; align-items: center; border-bottom: 1px solid #98979a; margin-bottom: 2px; padding-top: 6px; }
.sidebar button { width: 48px; height: 48px; margin-bottom: 4px; flex: none; }
.sidebar button svg { width: 36px; height: 36px; }
.sidebar .current { border: 1px solid #a3a2a4; border-radius: 5px; margin-top: 6px; }

.statusbar {
  flex: none;
  height: 31px;
  display: grid;
  grid-template-columns: 222px 358px 231px 265px 102px 43px 44px 43px 1fr 115px 214px 75px;
  align-items: center;
  border-top: 2px solid #a9a8aa;
  background: #f0eff0;
  color: #111;
}
.statusbar > span { height: 27px; padding-left: 14px; border-right: 1px solid #a5a4a6; display: flex; align-items: center; white-space: nowrap; }
.statusbar > span:last-child { border: 0; }
.statusbar > .mid { justify-content: center; padding: 0; }
.statusbar > .views { gap: 8px; padding: 0 0 0 17px; }
.statusbar > .zoom { gap: 8px; }
.statusbar > .percent { padding-left: 12px; }
.zoom input {
  appearance: none;
  width: 145px;
  height: 20px;
  margin: 0;
  background: linear-gradient(#959597, #959597) 0 9px / 100% 3px no-repeat, linear-gradient(#959597, #959597) 18px 2px / 2px 16px no-repeat;
}
.zoom input::-webkit-slider-thumb { appearance: none; width: 13px; height: 13px; border: 2px solid #808082; border-radius: 50%; background: #fff; }

.watermark { position: absolute; left: 70px; bottom: 66px; display: flex; align-items: flex-start; gap: 4px; opacity: .6; pointer-events: none; font: bold 49px/44px "Noto Sans CJK TC", sans-serif; color: #71b996; }
```
